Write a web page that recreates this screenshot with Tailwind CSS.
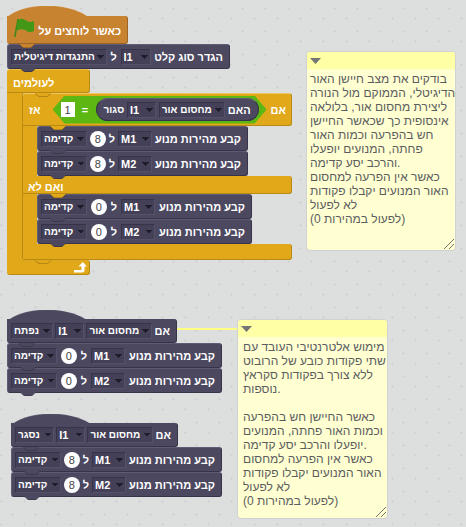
<!DOCTYPE html>
<html lang="he">
<head>
<meta charset="utf-8">
<meta name="viewport" content="width=device-width, initial-scale=1">
<title>Scripts</title>
<script src="https://cdn.jsdelivr.net/npm/@tailwindcss/browser@4"></script>
</head>
<body class="bg-[#dddede]">
<svg class="hidden" aria-hidden="true">
  <symbol id="bump" viewBox="0 0 16 4"><path d="M0 0H16L13 3Q12 4 11 4H5Q4 4 3 3Z"/><path d="M0 .5L3 3Q4 3.600 5 3.600H11Q12 3.600 13 3L16 .5" fill="none" stroke="#000" stroke-opacity=".22"/></symbol>
  <symbol id="hat" viewBox="0 0 81 12"><path d="M0 12V11C18 -4 60 -4 80 10L81 12Z"/><path d="M0 11C18 -4 60 -4 80 10" fill="none" stroke="#fff" stroke-opacity=".2"/></symbol>
</svg>
<main class="relative min-h-screen overflow-hidden font-['Liberation_Sans',sans-serif] text-[11px] leading-[14px] font-bold text-white
  [&_select]:h-4 [&_select]:appearance-none [&_select]:border [&_select]:border-[#37344a] [&_select]:border-r-[#555169] [&_select]:border-b-[#555169] [&_select]:bg-[#434057] [&_select]:bg-[linear-gradient(to_bottom_right,#1f1d2b_50%,transparent_50%),linear-gradient(to_bottom_left,#1f1d2b_50%,transparent_50%)] [&_select]:bg-[length:4px_4px,4px_4px] [&_select]:bg-[position:right_1px_top_5px,right_5px_top_5px] [&_select]:bg-no-repeat [&_select]:pl-[2px] [&_select]:leading-[14px] [&_select]:[direction:ltr]">
  <svg class="absolute inset-0 size-full" aria-hidden="true">
    <defs><pattern id="grid" width="23" height="23" patternUnits="userSpaceOnUse"><path d="M0 18.500H3M1.500 17V20M11 8.500H14M12.500 7V10" stroke="#d0d2d3"/></pattern></defs>
    <rect width="100%" height="100%" fill="url(#grid)"/>
  </svg>

  <!-- Main script -->
  <section class="absolute left-[7px] top-[6px] flex flex-col items-start" aria-label="Main script">
    <div class="relative w-[121px] pt-[10px]">
      <svg class="absolute left-0 top-0 h-3 w-[81px] fill-[#c88330]"><use href="#hat"/></svg>
      <div dir="rtl" class="relative flex h-7 items-center justify-between rounded-[3px] rounded-tl-none border-r border-b border-[#9c6526] bg-[#c88330] pr-[6px] pl-[7px]">
        <span class="pt-[2px]">כאשר לוחצים על</span>
        <svg class="mb-1 h-5 w-5 shrink-0" viewBox="0 0 20 20" role="img" aria-label="Green flag"><path d="M4 1L0.800 19" stroke="#3c8a1c" stroke-width="1.500" fill="none"/><path d="M4 2C8 -.5 10 1 12 2.500C15 4.500 17 4 20 3V13C16 15 14 14 11 12C8 10.500 5 11 2.500 13Z" fill="#439717"/></svg>
      </div>
      <svg class="absolute top-full left-3 z-10 h-1 w-4 fill-[#c88330]"><use href="#bump"/></svg>
    </div>

    <div dir="rtl" class="relative flex h-[25px] w-[223px] items-center justify-between rounded-[3px] border border-t-[#5f5b74] border-r-[#37344a] border-b-[#37344a] border-l-[#5f5b74] bg-[#4b4860] pr-[6px] pl-[3px]">
      <span>הגדר סוג קלט</span>
      <select class="w-[30px]" aria-label="קלט"><option>I1</option></select>
      <span>ל</span>
      <select class="w-[96px] text-[10px]" aria-label="סוג"><option>התנגדות דיגיטלית</option></select>
      <svg class="absolute top-full left-3 z-10 h-1 w-4 fill-[#4b4860]"><use href="#bump"/></svg>
    </div>

    <!-- Forever loop -->
    <div class="flex flex-col items-start">
      <div class="flex h-6 w-[83px] items-center rounded-t-[3px] rounded-br-[3px] border-t border-r border-b border-[#b88a15] border-t-[#eec04a] bg-[#e1a91a] pt-[3px] pl-[6px]"><span dir="rtl">לעולמים</span></div>
      <div class="border-l-[15px] border-[#e1a91a] bg-[#e1a91a]">

        <!-- If / else -->
        <div class="relative flex w-[270px] flex-col items-start rounded-l-[3px] border-l border-[#b88a15] bg-[#dddede]">
          <svg class="absolute top-0 left-3 z-10 h-1 w-4 fill-[#e1a91a]"><use href="#bump"/></svg>
          <div dir="rtl" class="flex h-[33px] w-full items-center gap-1 rounded-[3px] rounded-bl-none border-t border-r border-b border-[#b88a15] border-t-[#f0c860] bg-[#e1a91a] pr-[5px] pl-[6px]">
            <span>אם</span>
            <div class="flex h-7 w-[214px] items-center justify-between bg-[#5cb712] px-2 [clip-path:polygon(12px_0,202px_0,100%_50%,202px_100%,12px_100%,0_50%)]">
              <div class="flex h-[23px] w-[163px] items-center justify-between rounded-full border border-[#37344a] border-t-[#5f5b74] bg-[#4b4860] px-[7px]">
                <span>האם</span>
                <select class="w-[66px] text-[10px]" aria-label="חיישן"><option>מחסום אור</option></select>
                <select class="w-[29px]" aria-label="כניסה"><option>I1</option></select>
                <span class="text-[10px]">סגור</span>
              </div>
              <span class="px-1">=</span>
              <input class="h-[15px] w-[14px] bg-white text-center font-normal text-[#444]" aria-label="ערך" value="1">
            </div>
            <span class="mr-auto">אז</span>
          </div>

          <div class="flex w-full flex-col items-start border-l-[14px] border-[#e1a91a]">
            <div dir="rtl" class="relative flex h-[25px] w-[211px] items-center justify-between rounded-[3px] border border-t-[#5f5b74] border-r-[#37344a] border-b-[#37344a] border-l-[#5f5b74] bg-[#4b4860] pr-[6px] pl-[3px]">
              <svg class="absolute -top-px left-3 z-10 h-1 w-4 fill-[#e1a91a]"><use href="#bump"/></svg>
              <span>קבע מהירות מנוע</span>
              <select class="w-[34px]" aria-label="מנוע"><option>M1</option></select>
              <span>ל</span>
              <input class="size-4 rounded-full bg-white text-center font-normal text-[#444]" aria-label="מהירות" value="8">
              <select class="w-[46px] text-[10px]" aria-label="כיוון"><option>קדימה</option></select>
              <svg class="absolute top-full left-3 z-10 h-1 w-4 fill-[#4b4860]"><use href="#bump"/></svg>
            </div>
            <div dir="rtl" class="relative flex h-[25px] w-[211px] items-center justify-between rounded-[3px] border border-t-[#5f5b74] border-r-[#37344a] border-b-[#37344a] border-l-[#5f5b74] bg-[#4b4860] pr-[6px] pl-[3px]">
              <span>קבע מהירות מנוע</span>
              <select class="w-[34px]" aria-label="מנוע"><option>M2</option></select>
              <span>ל</span>
              <input class="size-4 rounded-full bg-white text-center font-normal text-[#444]" aria-label="מהירות" value="8">
              <select class="w-[46px] text-[10px]" aria-label="כיוון"><option>קדימה</option></select>
              <svg class="absolute top-full left-3 z-10 h-1 w-4 fill-[#4b4860]"><use href="#bump"/></svg>
            </div>
          </div>

          <div class="flex h-[18px] w-full items-center rounded-r-[3px] border-r border-b border-[#b88a15] bg-[#e1a91a] pt-1 pl-[5px]"><span dir="rtl">ואם לא</span></div>

          <div class="flex w-full flex-col items-start border-l-[14px] border-[#e1a91a]">
            <div dir="rtl" class="relative flex h-[25px] w-[215px] items-center justify-between rounded-[3px] border border-t-[#5f5b74] border-r-[#37344a] border-b-[#37344a] border-l-[#5f5b74] bg-[#4b4860] pr-[6px] pl-[3px]">
              <svg class="absolute -top-px left-3 z-10 h-1 w-4 fill-[#e1a91a]"><use href="#bump"/></svg>
              <span>קבע מהירות מנוע</span>
              <select class="w-[34px]" aria-label="מנוע"><option>M1</option></select>
              <span>ל</span>
              <input class="size-4 rounded-full bg-white text-center font-normal text-[#444]" aria-label="מהירות" value="0">
              <select class="w-[46px] text-[10px]" aria-label="כיוון"><option>קדימה</option></select>
              <svg class="absolute top-full left-3 z-10 h-1 w-4 fill-[#4b4860]"><use href="#bump"/></svg>
            </div>
            <div dir="rtl" class="relative flex h-[25px] w-[215px] items-center justify-between rounded-[3px] border border-t-[#5f5b74] border-r-[#37344a] border-b-[#37344a] border-l-[#5f5b74] bg-[#4b4860] pr-[6px] pl-[3px]">
              <span>קבע מהירות מנוע</span>
              <select class="w-[34px]" aria-label="מנוע"><option>M2</option></select>
              <span>ל</span>
              <input class="size-4 rounded-full bg-white text-center font-normal text-[#444]" aria-label="מהירות" value="0">
              <select class="w-[46px] text-[10px]" aria-label="כיוון"><option>קדימה</option></select>
              <svg class="absolute top-full left-3 z-10 h-1 w-4 fill-[#4b4860]"><use href="#bump"/></svg>
            </div>
          </div>

          <div class="h-4 w-full rounded-r-[3px] border-r border-b border-[#b88a15] bg-[#e1a91a]"></div>
          <svg class="absolute top-full left-3 z-10 h-1 w-4 fill-[#e1a91a]"><use href="#bump"/></svg>
        </div>
      </div>
      <div class="flex h-[15px] w-[83px] items-start justify-end rounded-b-[3px] rounded-tr-[3px] border-r border-b border-[#b88a15] bg-[#e1a91a] pt-px pr-[2px]">
        <svg class="h-3 w-[13px]" viewBox="0 0 13 12" aria-hidden="true"><path d="M0 9H7.500V5.500H4.500L8.800 1L13 5.500H10.500V9Q10.500 11.500 8 11.500H0Z" fill="#fff"/></svg>
      </div>
    </div>
  </section>

  <!-- Light barrier opened -->
  <section class="absolute left-[7px] top-[310px] flex flex-col items-start" aria-label="Barrier opened">
    <div class="relative w-[170px] pt-[9px]">
      <svg class="absolute left-0 top-0 h-3 w-[81px] fill-[#4b4860]"><use href="#hat"/></svg>
      <div dir="rtl" class="relative flex h-6 items-center justify-between rounded-[3px] rounded-tl-none border-r border-b border-[#37344a] bg-[#4b4860] pr-[6px] pl-1">
        <span>אם</span>
        <select class="w-[66px] text-[10px]" aria-label="חיישן"><option>מחסום אור</option></select>
        <select class="w-[29px]" aria-label="כניסה"><option>I1</option></select>
        <select class="w-[42px] text-[10px]" aria-label="מצב"><option>נפתח</option></select>
      </div>
      <svg class="absolute top-full left-3 z-10 h-1 w-4 fill-[#4b4860]"><use href="#bump"/></svg>
    </div>
    <div dir="rtl" class="relative flex h-[25px] w-[215px] items-center justify-between rounded-[3px] border border-t-[#5f5b74] border-r-[#37344a] border-b-[#37344a] border-l-[#5f5b74] bg-[#4b4860] pr-[6px] pl-[3px]">
      <span>קבע מהירות מנוע</span>
      <select class="w-[34px]" aria-label="מנוע"><option>M1</option></select>
      <span>ל</span>
      <input class="size-4 rounded-full bg-white text-center font-normal text-[#444]" aria-label="מהירות" value="0">
      <select class="w-[46px] text-[10px]" aria-label="כיוון"><option>קדימה</option></select>
      <svg class="absolute top-full left-3 z-10 h-1 w-4 fill-[#4b4860]"><use href="#bump"/></svg>
    </div>
    <div dir="rtl" class="relative flex h-[25px] w-[215px] items-center justify-between rounded-[3px] border border-t-[#5f5b74] border-r-[#37344a] border-b-[#37344a] border-l-[#5f5b74] bg-[#4b4860] pr-[6px] pl-[3px]">
      <span>קבע מהירות מנוע</span>
      <select class="w-[34px]" aria-label="מנוע"><option>M2</option></select>
      <span>ל</span>
      <input class="size-4 rounded-full bg-white text-center font-normal text-[#444]" aria-label="מהירות" value="0">
      <select class="w-[46px] text-[10px]" aria-label="כיוון"><option>קדימה</option></select>
      <svg class="absolute top-full left-3 z-10 h-1 w-4 fill-[#4b4860]"><use href="#bump"/></svg>
    </div>
  </section>

  <!-- Light barrier closed -->
  <section class="absolute left-[11px] top-[414px] flex flex-col items-start" aria-label="Barrier closed">
    <div class="relative w-[167px] pt-[9px]">
      <svg class="absolute left-0 top-0 h-3 w-[81px] fill-[#4b4860]"><use href="#hat"/></svg>
      <div dir="rtl" class="relative flex h-6 items-center justify-between rounded-[3px] rounded-tl-none border-r border-b border-[#37344a] bg-[#4b4860] pr-[6px] pl-1">
        <span>אם</span>
        <select class="w-[66px] text-[10px]" aria-label="חיישן"><option>מחסום אור</option></select>
        <select class="w-[29px]" aria-label="כניסה"><option>I1</option></select>
        <select class="w-[39px] text-[10px]" aria-label="מצב"><option>נסגר</option></select>
      </div>
      <svg class="absolute top-full left-3 z-10 h-1 w-4 fill-[#4b4860]"><use href="#bump"/></svg>
    </div>
    <div dir="rtl" class="relative flex h-[25px] w-[211px] items-center justify-between rounded-[3px] border border-t-[#5f5b74] border-r-[#37344a] border-b-[#37344a] border-l-[#5f5b74] bg-[#4b4860] pr-[6px] pl-[3px]">
      <span>קבע מהירות מנוע</span>
      <select class="w-[34px]" aria-label="מנוע"><option>M1</option></select>
      <span>ל</span>
      <input class="size-4 rounded-full bg-white text-center font-normal text-[#444]" aria-label="מהירות" value="8">
      <select class="w-[46px] text-[10px]" aria-label="כיוון"><option>קדימה</option></select>
      <svg class="absolute top-full left-3 z-10 h-1 w-4 fill-[#4b4860]"><use href="#bump"/></svg>
    </div>
    <div dir="rtl" class="relative flex h-[25px] w-[211px] items-center justify-between rounded-[3px] border border-t-[#5f5b74] border-r-[#37344a] border-b-[#37344a] border-l-[#5f5b74] bg-[#4b4860] pr-[6px] pl-[3px]">
      <span>קבע מהירות מנוע</span>
      <select class="w-[34px]" aria-label="מנוע"><option>M2</option></select>
      <span>ל</span>
      <input class="size-4 rounded-full bg-white text-center font-normal text-[#444]" aria-label="מהירות" value="8">
      <select class="w-[46px] text-[10px]" aria-label="כיוון"><option>קדימה</option></select>
      <svg class="absolute top-full left-3 z-10 h-1 w-4 fill-[#4b4860]"><use href="#bump"/></svg>
    </div>
  </section>

  <!-- Comments -->
  <div class="absolute left-[177px] top-[328px] h-[2px] w-[61px] bg-[#ffff80]"></div>
  <article class="absolute left-[306px] top-[51px] flex w-[150px] flex-col overflow-hidden rounded-[4px] border border-[#d0d1d2] bg-[#ffffd2] text-[12px] font-normal text-[#5c5d5f]">
    <button class="flex h-[17px] items-center bg-[#ffffa5] pl-[3px]" aria-label="Collapse comment"><svg class="h-[6px] w-[11px] fill-[#757575]" viewBox="0 0 11 6"><path d="M0 0H11L5.500 6Z"/></svg></button>
    <textarea class="block h-[181px] resize-none overflow-hidden pt-[3px] pl-[3px] whitespace-pre" dir="ltr" aria-label="Comment">בודקים את מצב חיישן האור
הדיגיטלי, הממוקם מול הנורה
ליצירת מחסום אור, בלולאה
אינסופית כך שכאשר החיישן
חש בהפרעה וכמות האור
פחתה, המנועים יופעלו
והרכב יסע קדימה.
כאשר אין הפרעה למחסום
האור המנועים יקבלו פקודות
לא לפעול
(לפעול במהירות 0)</textarea>
    <svg class="absolute right-px bottom-px size-[10px]" viewBox="0 0 10 10" aria-hidden="true"><path d="M0 10L10 0M5 10L10 5" stroke="#757575"/></svg>
  </article>
  <article class="absolute left-[237px] top-[319px] flex w-[151px] flex-col overflow-hidden rounded-[4px] border border-[#d0d1d2] bg-[#ffffd2] text-[12px] font-normal text-[#5c5d5f]">
    <button class="flex h-[17px] items-center bg-[#ffffa5] pl-[3px]" aria-label="Collapse comment"><svg class="h-[6px] w-[11px] fill-[#757575]" viewBox="0 0 11 6"><path d="M0 0H11L5.500 6Z"/></svg></button>
    <textarea class="block h-[181px] resize-none overflow-hidden pt-[3px] pl-[5px] whitespace-pre" dir="ltr" aria-label="Comment">מימוש אלטרנטיבי העובד עם
שתי פקודות כובע של הרובוט
ללא צורך בפקודות סקראץ
נוספות.

כאשר החיישן חש בהפרעה
וכמות האור פחתה, המנועים
יופעלו והרכב יסע קדימה.
כאשר אין הפרעה למחסום
האור המנועים יקבלו פקודות
לא לפעול
(לפעול במהירות 0)</textarea>
    <svg class="absolute right-px bottom-px size-[10px]" viewBox="0 0 10 10" aria-hidden="true"><path d="M0 10L10 0M5 10L10 5" stroke="#757575"/></svg>
  </article>
</main>
</body>
</html>
